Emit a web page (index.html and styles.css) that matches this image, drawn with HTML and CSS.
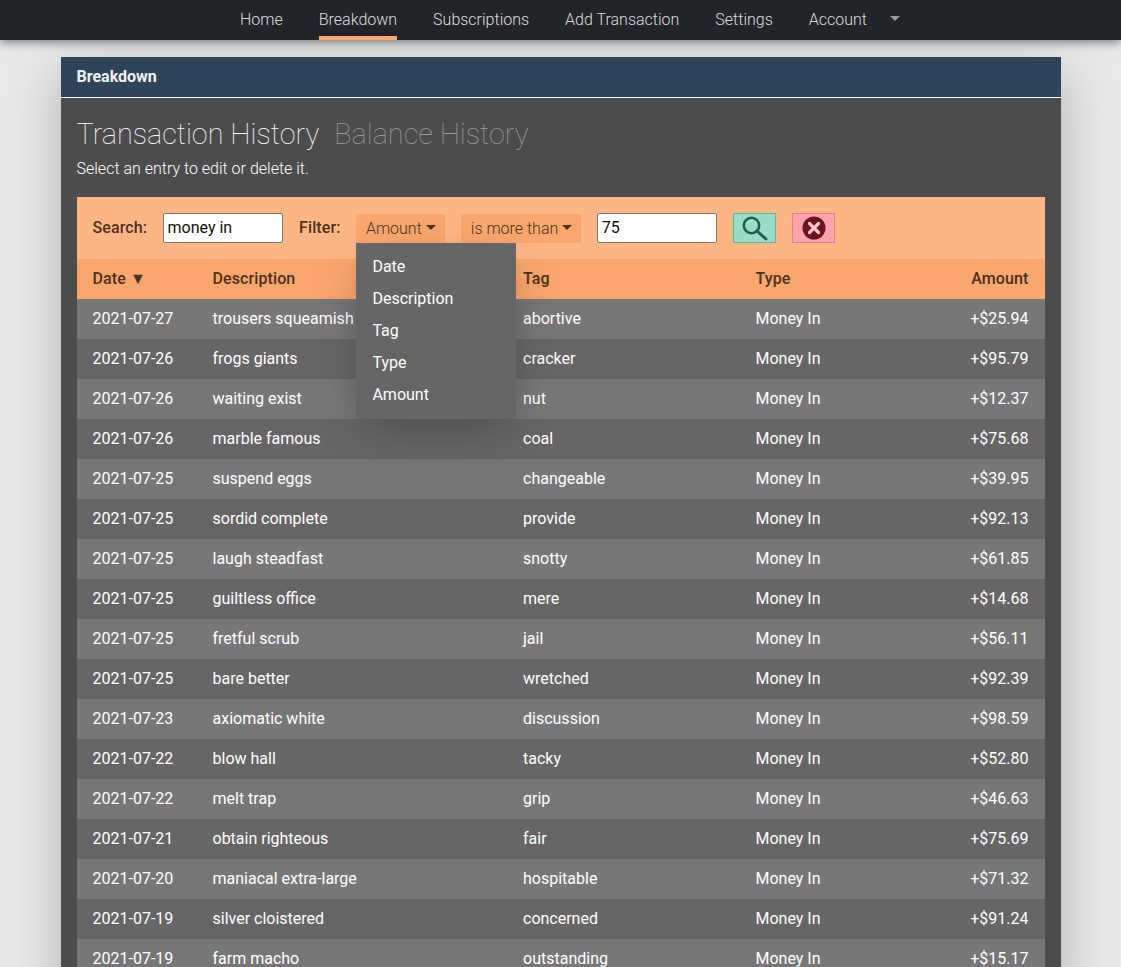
FILE: index.html
```html
<!DOCTYPE html>
<html lang="en">
<head>
<meta charset="utf-8">
<title>Breakdown</title>
<link rel="stylesheet" href="styles.css">
</head>
<body>
<nav class="nav">
  <a class="nav-link">Home</a>
  <a class="nav-link active">Breakdown</a>
  <a class="nav-link">Subscriptions</a>
  <a class="nav-link">Add Transaction</a>
  <a class="nav-link">Settings</a>
  <a class="nav-link">Account</a>
  <span class="nav-caret"></span>
</nav>
<main class="panel">
  <header class="panel-head">Breakdown</header>
  <section class="panel-body">
    <h1 class="titles"><span class="title-on">Transaction History</span><span class="title-off">Balance History</span></h1>
    <p class="hint">Select an entry to edit or delete it.</p>
    <div class="toolbar">
      <label class="tool-label">Search:</label>
      <input class="tool-input search-input" value="money in">
      <label class="tool-label">Filter:</label>
      <div class="drop-wrap">
        <button class="drop-btn">Amount<span class="caret"></span></button>
        <ul class="menu">
          <li>Date</li>
          <li>Description</li>
          <li>Tag</li>
          <li>Type</li>
          <li>Amount</li>
        </ul>
      </div>
      <button class="drop-btn op-btn">is more than<span class="caret"></span></button>
      <input class="tool-input value-input" value="75">
      <button class="icon-btn go">
        <svg width="28" height="28" viewBox="0 0 28 28"><circle cx="10.5" cy="11.5" r="7.7" fill="none" stroke="#255a4e" stroke-width="2.6"/><path d="M16 17l9 8" stroke="#255a4e" stroke-width="3" stroke-linecap="round"/></svg>
      </button>
      <button class="icon-btn clear">
        <svg width="24" height="24" viewBox="0 0 24 24"><circle cx="12" cy="12" r="11.5" fill="#6b1420"/><path d="M7.5 7.5l9 9M16.5 7.5l-9 9" stroke="#f7c4c8" stroke-width="3.2" stroke-linecap="round"/></svg>
      </button>
    </div>
    <table class="grid">
      <colgroup><col class="c-date"><col class="c-desc"><col class="c-tag"><col class="c-type"><col class="c-amt"></colgroup>
      <thead>
        <tr><th>Date <span class="sort">▼</span></th><th>Description</th><th>Tag</th><th>Type</th><th class="amt">Amount</th></tr>
      </thead>
      <tbody>
        <tr><td>2021-07-27</td><td>trousers squeamish</td><td>abortive</td><td>Money In</td><td class="amt">+$25.94</td></tr>
        <tr><td>2021-07-26</td><td>frogs giants</td><td>cracker</td><td>Money In</td><td class="amt">+$95.79</td></tr>
        <tr><td>2021-07-26</td><td>waiting exist</td><td>nut</td><td>Money In</td><td class="amt">+$12.37</td></tr>
        <tr><td>2021-07-26</td><td>marble famous</td><td>coal</td><td>Money In</td><td class="amt">+$75.68</td></tr>
        <tr><td>2021-07-25</td><td>suspend eggs</td><td>changeable</td><td>Money In</td><td class="amt">+$39.95</td></tr>
        <tr><td>2021-07-25</td><td>sordid complete</td><td>provide</td><td>Money In</td><td class="amt">+$92.13</td></tr>
        <tr><td>2021-07-25</td><td>laugh steadfast</td><td>snotty</td><td>Money In</td><td class="amt">+$61.85</td></tr>
        <tr><td>2021-07-25</td><td>guiltless office</td><td>mere</td><td>Money In</td><td class="amt">+$14.68</td></tr>
        <tr><td>2021-07-25</td><td>fretful scrub</td><td>jail</td><td>Money In</td><td class="amt">+$56.11</td></tr>
        <tr><td>2021-07-25</td><td>bare better</td><td>wretched</td><td>Money In</td><td class="amt">+$92.39</td></tr>
        <tr><td>2021-07-23</td><td>axiomatic white</td><td>discussion</td><td>Money In</td><td class="amt">+$98.59</td></tr>
        <tr><td>2021-07-22</td><td>blow hall</td><td>tacky</td><td>Money In</td><td class="amt">+$52.80</td></tr>
        <tr><td>2021-07-22</td><td>melt trap</td><td>grip</td><td>Money In</td><td class="amt">+$46.63</td></tr>
        <tr><td>2021-07-21</td><td>obtain righteous</td><td>fair</td><td>Money In</td><td class="amt">+$75.69</td></tr>
        <tr><td>2021-07-20</td><td>maniacal extra-large</td><td>hospitable</td><td>Money In</td><td class="amt">+$71.32</td></tr>
        <tr><td>2021-07-19</td><td>silver cloistered</td><td>concerned</td><td>Money In</td><td class="amt">+$91.24</td></tr>
        <tr><td>2021-07-19</td><td>farm macho</td><td>outstanding</td><td>Money In</td><td class="amt">+$15.17</td></tr>
      </tbody>
    </table>
  </section>
</main>
</body>
</html>
```
FILE: styles.css
```css
* { box-sizing: border-box; }
html, body { height: 100%; }
body {
  margin: 0;
  background: #e9e9e9;
  font-family: Roboto, "Liberation Sans", sans-serif;
  font-size: 16px;
  line-height: 24px;
  color: #fff;
  overflow: hidden;
}
.nav {
  height: 40px;
  background: #212529;
  display: flex;
  justify-content: center;
  align-items: stretch;
  gap: 36px;
  padding-left: 19px;
  box-shadow: 0 2px 10px rgba(0, 0, 0, 0.5);
  position: relative;
  z-index: 2;
}
.nav-link {
  color: rgba(255, 255, 255, 0.85);
  font-weight: 300;
  line-height: 40px;
  border-bottom: 4px solid transparent;
}
.nav-link.active { border-bottom-color: #ffa76f; }
.nav-caret {
  width: 0;
  height: 0;
  margin: 16px 0 0 -13px;
  border-left: 5px solid transparent;
  border-right: 5px solid transparent;
  border-top: 5px solid rgba(255, 255, 255, 0.55);
}
.panel {
  width: 1000px;
  margin: 17px auto 0;
  box-shadow: 0 16px 48px rgba(0, 0, 0, 0.25);
}
.panel-head {
  height: 41px;
  background: #2d445b;
  border-bottom: 1px solid #fff;
  padding: 8px 16px 0;
  font-weight: 700;
  color: #f2f2f2;
}
.panel-body {
  background: #4c4c4c;
  padding: 16px;
}
.titles {
  margin: 0;
  font-size: 28.8px;
  line-height: 40px;
  font-weight: 100;
  display: flex;
  gap: 15px;
}
.title-on { color: #fff; }
.title-off { color: #999; }
.hint {
  margin: 3px 0 16px;
  font-weight: 300;
  color: #fff;
}
.toolbar {
  height: 62px;
  background: #ffb685;
  display: flex;
  align-items: center;
  padding: 0 16px;
  color: #4c3020;
}
.tool-label { font-weight: 500; letter-spacing: 0.1px; }
.tool-input {
  height: 30px;
  width: 120px;
  border: 1px solid #767676;
  border-radius: 2px;
  background: #fff;
  padding: 0 3.5px 1px;
  font: 16px Roboto, sans-serif;
  color: #111;
}
.search-input { margin: 0 16px; }
.value-input { margin: 0 16px; }
.drop-wrap { position: relative; margin: 0 16px 0 15.4px; height: 30px; }
.drop-btn {
  height: 29px;
  margin-top: 1px;
  padding: 0 9px 0 10px;
  border: 0;
  background: #faa76d;
  font: 300 16px Roboto, sans-serif;
  color: #4c3020;
  display: flex;
  align-items: center;
}
.caret {
  width: 0;
  height: 0;
  margin: -2px 0 0 4px;
  border-left: 5px solid transparent;
  border-right: 5px solid transparent;
  border-top: 5px solid #4c3020;
}
.menu {
  position: absolute;
  top: 30px;
  left: 0;
  width: 160px;
  height: 176px;
  margin: 0;
  padding: 8px 0;
  list-style: none;
  background: #666;
  color: #fff;
  box-shadow: 0 16px 48px -8px rgba(0, 0, 0, 0.28);
  z-index: 3;
}
.menu li { height: 32px; line-height: 32px; padding: 0 16.5px; }
.icon-btn {
  width: 43px;
  height: 30px;
  padding: 0;
  border: 1px solid;
  display: flex;
  align-items: center;
  justify-content: center;
}
.go { background: #98dec7; border-color: #5dbba0; }
.clear { background: #ffa4ab; border-color: #f0808c; margin-left: 16px; }
.grid {
  width: 968px;
  table-layout: fixed;
  border-collapse: collapse;
}
.c-date { width: 120px; }
.c-desc { width: 310.5px; }
.c-tag { width: 232.5px; }
.c-type { width: 150px; }
.c-amt { width: 155px; }
.grid th, .grid td {
  height: 40px;
  padding: 0 16px;
  text-align: left;
}
.grid th {
  background: #faa76d;
  color: #4c3020;
  font-weight: 500;
  letter-spacing: 0.1px;
}
.grid .amt { text-align: right; }
.sort { font-size: 16px; }
.grid tbody tr:nth-child(odd) { background: #777; }
.grid tbody tr:nth-child(even) { background: #666; }
```
